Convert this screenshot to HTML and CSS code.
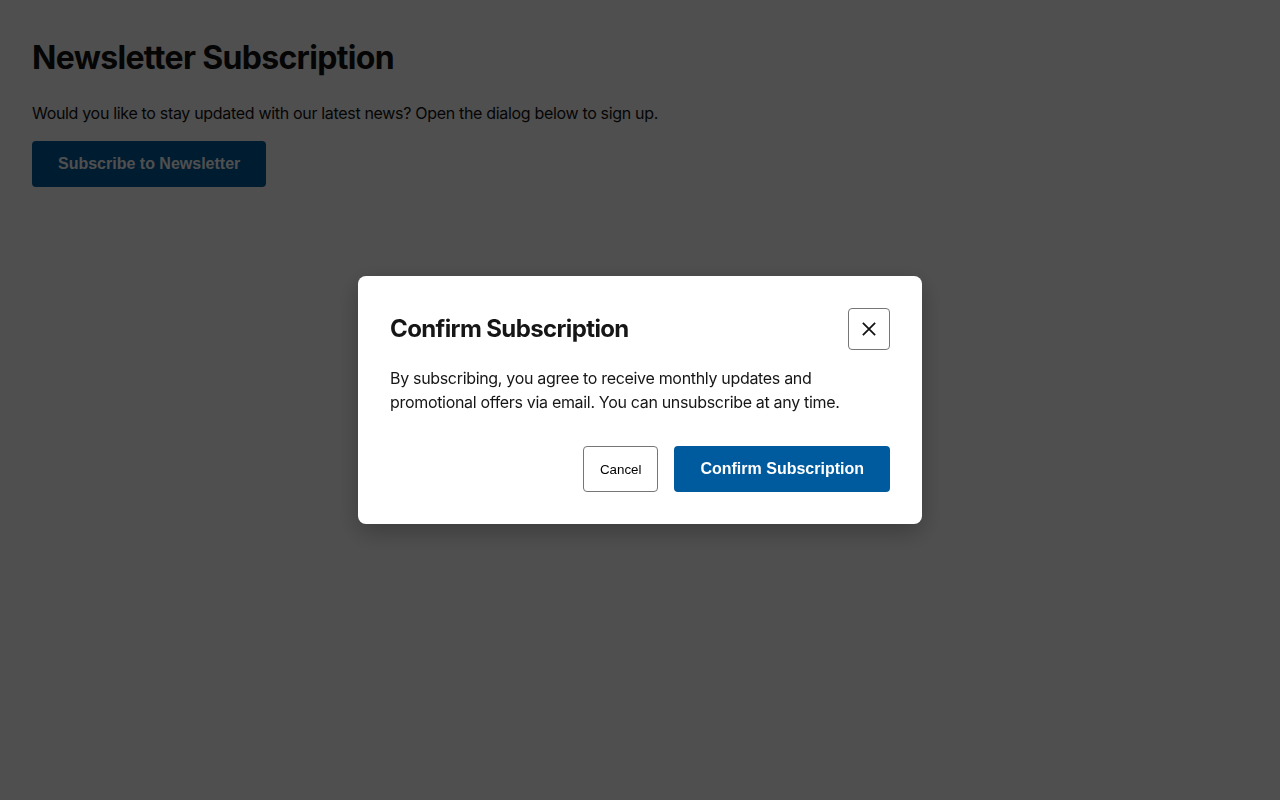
FILE: index.html
```html
<!DOCTYPE html>
<html lang="en">
<head>
<meta charset="utf-8">
<title>Newsletter Subscription</title>
<link rel="stylesheet" href="styles.css">
</head>
<body>
<main class="page">
  <h1 class="page-title">Newsletter Subscription</h1>
  <p class="page-text">Would you like to stay updated with our latest news? Open the dialog below to sign up.</p>
  <button class="btn btn-primary" type="button">Subscribe to Newsletter</button>
</main>
<div class="overlay">
  <div class="dialog" role="dialog" aria-labelledby="dlg-title">
    <div class="dialog-header">
      <h2 class="dialog-title" id="dlg-title">Confirm Subscription</h2>
      <button class="btn-close" type="button" aria-label="Close">
        <svg width="16" height="16" viewBox="0 0 16 16" aria-hidden="true"><path d="M1 1L15 15M15 1L1 15" stroke="#111" stroke-width="2" fill="none"/></svg>
      </button>
    </div>
    <p class="dialog-text">By subscribing, you agree to receive monthly updates and promotional offers via email. You can unsubscribe at any time.</p>
    <div class="dialog-footer">
      <button class="btn-secondary" type="button">Cancel</button>
      <button class="btn btn-primary" type="button">Confirm Subscription</button>
    </div>
  </div>
</div>
</body>
</html>
```
FILE: styles.css
```css
html, body {
  margin: 0;
  padding: 0;
  background: #ffffff;
  height: 100%;
}
body {
  font-family: Inter, "Noto Sans", sans-serif;
  color: #111111;
  letter-spacing: -0.32px;
}
.page {
  padding: 32px;
}
.page-title {
  font-size: 32px;
  font-weight: 700;
  line-height: 1.2;
  letter-spacing: -0.67px;
  margin: 7px 0 0 0;
}
.page-text {
  font-size: 16px;
  line-height: 1.5;
  margin: 24px 0 16px 0;
}
.btn {
  font-family: "Liberation Sans", Arial, sans-serif;
  font-size: 16px;
  font-weight: 700;
  letter-spacing: normal;
  padding: 12px 24px;
  border-radius: 4px;
  cursor: pointer;
}
.btn-primary {
  background: #005a9e;
  color: #ffffff;
  border: 2px solid #005a9e;
}
.overlay {
  position: fixed;
  inset: 0;
  background: rgba(0, 0, 0, 0.69);
  display: flex;
  align-items: center;
  justify-content: center;
}
.dialog {
  width: 500px;
  background: #ffffff;
  border-radius: 8px;
  padding: 32px;
  box-shadow: 0 8px 24px rgba(0, 0, 0, 0.25);
}
.dialog-header {
  display: flex;
  justify-content: space-between;
  align-items: center;
}
.dialog-title {
  font-size: 24px;
  font-weight: 700;
  line-height: 1.2;
  letter-spacing: -0.62px;
  margin: 0;
  color: #161616;
}
.btn-close {
  width: 42px;
  height: 42px;
  display: flex;
  align-items: center;
  justify-content: center;
  background: #ffffff;
  border: 1px solid #767676;
  border-radius: 4px;
  padding: 0;
  cursor: pointer;
}
.btn-close svg {
  width: 14px;
  height: 14px;
}
.dialog-text {
  font-size: 16px;
  line-height: 1.5;
  margin: 16px 0 32px 0;
  color: #161616;
}
.dialog-footer {
  display: flex;
  justify-content: flex-end;
  gap: 16px;
}
.btn-secondary {
  font-family: "Liberation Sans", Arial, sans-serif;
  font-size: 13.333px;
  letter-spacing: normal;
  background: #ffffff;
  color: #000000;
  border: 1px solid #767676;
  border-radius: 4px;
  padding: 12px 16px;
  cursor: pointer;
}
```
